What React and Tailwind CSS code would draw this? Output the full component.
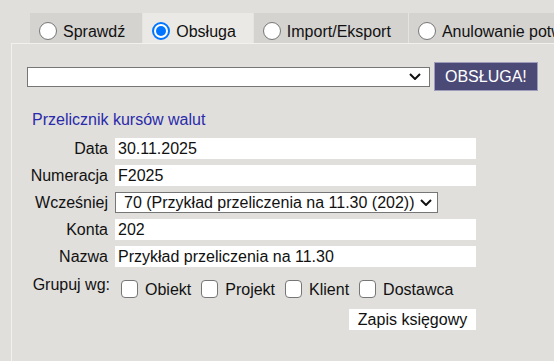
import React from 'react';

const Radio = ({ checked }) => (
  <span
    className={`w-[18px] h-[18px] rounded-full shrink-0 flex items-center justify-center bg-white border ${
      checked ? 'border-[#0075ff] border-2' : 'border-[#767676]'
    }`}
  >
    {checked && <span className="w-[10px] h-[10px] rounded-full bg-[#0075ff]" />}
  </span>
);

const Chevron = () => (
  <svg width="12" height="7" viewBox="0 0 12 7" className="shrink-0">
    <path d="M1 1 L6 6 L11 1" fill="none" stroke="#111" strokeWidth="2" />
  </svg>
);

const Checkbox = ({ label }) => (
  <label className="flex items-center gap-[7px] mr-[10px]">
    <span className="w-[17px] h-[18px] rounded-[4px] border border-[#767676] bg-white shrink-0" />
    <span className="mt-[3px]">{label}</span>
  </label>
);

const tabs = [
  { label: 'Sprawdź', active: false },
  { label: 'Obsługa', active: true },
  { label: 'Import/Eksport', active: false },
  { label: 'Anulowanie potwierdzenia', active: false },
];

const fields = [
  { label: 'Data', value: '30.11.2025' },
  { label: 'Numeracja', value: 'F2025' },
  { label: 'Wcześniej', value: '70 (Przykład przeliczenia na 11.30 (202))', select: true },
  { label: 'Konta', value: '202' },
  { label: 'Nazwa', value: 'Przykład przeliczenia na 11.30' },
];

export default function App() {
  return (
    <div
      className="w-[554px] h-[361px] overflow-hidden bg-[#e0dfdc] text-[16px] text-[#111] pt-[13px]"
      style={{ fontFamily: '"Liberation Sans", Arial, sans-serif' }}
    >
      {/* Tabs */}
      <div className="flex ml-[30px] h-[30px] whitespace-nowrap overflow-hidden">
        {tabs.map((t) => (
          <div
            key={t.label}
            className={`flex items-start gap-[6px] pl-[9px] pr-[17px] pt-[9px] border-r border-[#e6e4e1] ${
              t.active ? 'bg-[#ebe9e6]' : 'bg-[#d5d3d0]'
            }`}
          >
            <Radio checked={t.active} />
            <span className="leading-[18px] mt-[1px]">{t.label}</span>
          </div>
        ))}
      </div>

      {/* Panel */}
      <div className="ml-[11px] h-full border-l border-t border-[#f2f1ef] pl-[15px]">
        <div className="flex items-center gap-[4px] mt-[18px]">
          <div className="w-[403px] h-[20px] bg-[#fefffe] border border-[#767676] flex items-center justify-end pr-[8px]">
            <Chevron />
          </div>
          <button className="h-[29px] px-[10px] bg-[#4b4a77] border border-[#9d9cba] text-white leading-none">
            OBSŁUGA!
          </button>
        </div>

        <div className="text-[#2a2aaa] ml-[5px] mt-[20px] leading-[18px]">Przelicznik kursów walut</div>

        <div className="flex flex-col gap-[6px] mt-[9px]">
          {fields.map((f) => (
            <div key={f.label} className="flex items-center h-[21px]">
              <span className="w-[81px] text-right">{f.label}</span>
              {f.select ? (
                <div className="ml-[7px] w-[323px] h-[21px] bg-white border border-[#767676] flex items-center pl-[8px] pr-[5px] justify-between whitespace-nowrap">
                  <span>{f.value}</span>
                  <Chevron />
                </div>
              ) : (
                <div className="ml-[7px] w-[361px] h-[21px] bg-[#fefffe] flex items-center pl-[3px] whitespace-nowrap">
                  {f.value}
                </div>
              )}
            </div>
          ))}
        </div>

        <div className="flex items-start mt-[8px]">
          <span className="w-[83px] text-right mt-[-2px]">Grupuj wg:</span>
          <div className="flex ml-[11px]">
            <Checkbox label="Obiekt" />
            <Checkbox label="Projekt" />
            <Checkbox label="Klient" />
            <Checkbox label="Dostawca" />
          </div>
        </div>

        <div className="w-[449px] flex justify-end mt-[7px]">
          <button className="h-[21px] w-[127px] bg-[#fefffe] leading-none">Zapis księgowy</button>
        </div>
      </div>
    </div>
  );
}
